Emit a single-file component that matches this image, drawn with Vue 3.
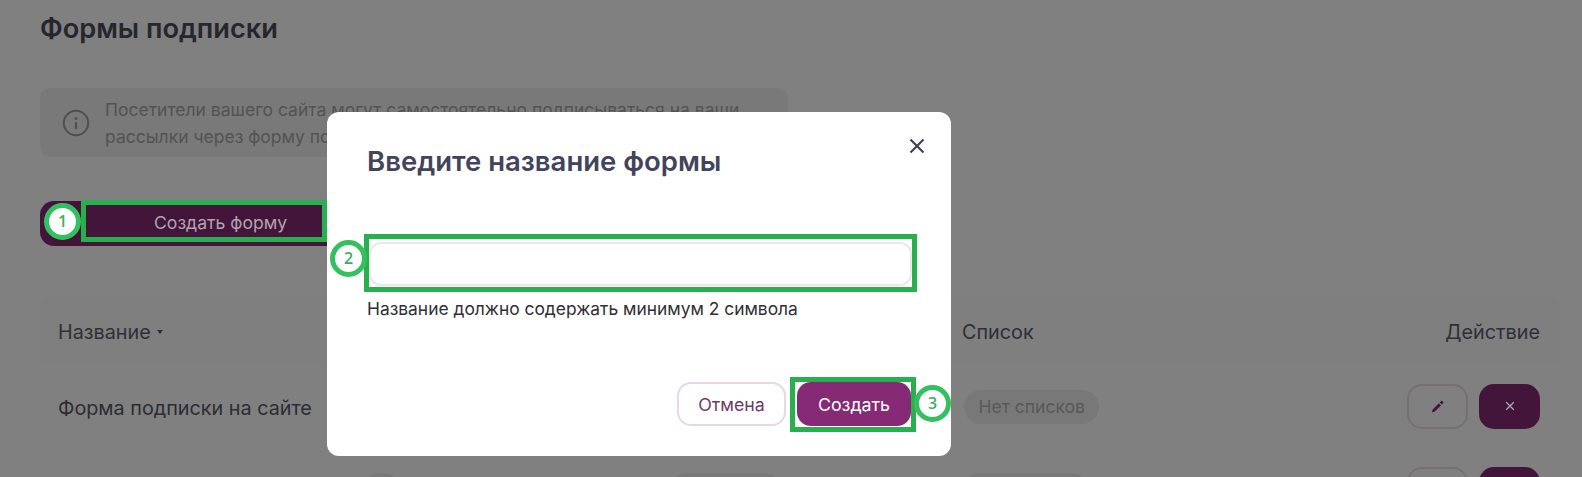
<template>
  <div class="page">
    <h1 class="title">Формы подписки</h1>

    <div class="info">
      <svg class="info-icon" viewBox="0 0 28 28" width="28" height="28" fill="none">
        <circle cx="14" cy="14" r="12.2" stroke="#4f4f4f" stroke-width="2" />
        <circle cx="14" cy="9.6" r="1.4" fill="#4f4f4f" />
        <rect x="12.9" y="13" width="2.2" height="7" rx="1" fill="#4f4f4f" />
      </svg>
      <p>
        Посетители вашего сайта могут самостоятельно подписываться на ваши<br />
        рассылки через форму подписки
      </p>
    </div>

    <button class="create-btn">Создать форму</button>

    <div class="table">
      <div class="thead row">
        <div class="sort">Название <span class="caret"></span></div>
        <div></div>
        <div></div>
        <div>Список</div>
        <div class="right">Действие</div>
      </div>
      <div v-for="(r, i) in rows" :key="i" class="tr row">
        <div class="name">{{ r.name }}</div>
        <div><span class="chip chip-short"></span></div>
        <div><span class="chip chip-mid"></span></div>
        <div><span class="chip">{{ r.list }}</span></div>
        <div class="actions">
          <button class="act edit">
            <svg viewBox="0 0 16 16" width="15" height="15">
              <path d="M2 14.500l.9-3.300 6.600-6.600 2.200 2.200-6.600 6.600z" fill="#43153b" />
              <path d="M10.400 3.700l1.300-1.300a1.200 1.200 0 0 1 1.700 0l.5.500a1.200 1.200 0 0 1 0 1.700l-1.300 1.300z" fill="#43153b" />
            </svg>
          </button>
          <button class="act del">
            <svg viewBox="0 0 12 12" width="10" height="10" fill="none">
              <path d="M1.500 1.500l9 9M10.500 1.500l-9 9" stroke="#b9a5b5" stroke-width="1.500" />
            </svg>
          </button>
        </div>
      </div>
    </div>

    <!-- обводки со скриншота поверх кнопки -->
    <div class="frame frame-btn"></div>
    <div class="badge badge-1">1</div>

    <div class="modal">
      <div class="modal-head">
        <h2>Введите название формы</h2>
        <svg class="close" viewBox="0 0 16 16" width="16" height="16" fill="none">
          <path d="M1.500 1.500l13 13M14.500 1.500l-13 13" stroke="#3f4156" stroke-width="2.200" />
        </svg>
      </div>
      <input class="name-input" type="text" />
      <p class="hint">Название должно содержать минимум 2 символа</p>
      <div class="modal-foot">
        <button class="btn ghost">Отмена</button>
        <button class="btn solid">Создать</button>
      </div>
      <div class="frame frame-input"></div>
      <div class="badge badge-2">2</div>
      <div class="frame frame-save"></div>
      <div class="badge badge-3">3</div>
    </div>
  </div>
</template>

<script setup>
const rows = [
  { name: "Форма подписки на сайте", list: "Нет списков" },
  { name: "", list: "" },
];
</script>

<style>
html,
body {
  margin: 0;
  background: #808080;
}
</style>

<style scoped>
.page {
  position: relative;
  height: 477px;
  overflow: hidden;
  padding: 13px 22px 0 40px;
  box-sizing: border-box;
  background: #808080;
  font-family: Inter, "Noto Sans", sans-serif;
  color: #2a2a33;
}
.title {
  margin: 0;
  font-size: 27.200px;
  line-height: 32px;
  font-weight: 600;
  color: #26262d;
}
.info {
  display: flex;
  align-items: center;
  gap: 15px;
  width: 748px;
  height: 69px;
  margin-top: 43px;
  padding-left: 22px;
  box-sizing: border-box;
  background: #797979;
  border-radius: 10px;
}
.info-icon {
  flex: none;
}
.info p {
  margin: 0;
  font-size: 17.500px;
  line-height: 27px;
  color: #535353;
  white-space: nowrap;
}
.create-btn {
  display: block;
  width: 300px;
  height: 45px;
  margin-top: 44px;
  padding: 0 0 2px 114px;
  border: 0;
  border-radius: 14px;
  background: #43153b;
  color: #b3a3b0;
  font: 400 17.600px Inter, sans-serif;
  text-align: left;
}
.table {
  margin-top: 51px;
  background: #7f7f7f;
  border-radius: 10px;
}
.row {
  display: grid;
  grid-template-columns: 304px 306px 294px 1fr 200px;
  align-items: center;
  padding: 0 20px 0 18px;
  font-size: 19.800px;
}
.thead {
  box-sizing: border-box;
  height: 68px;
  padding-top: 2px;
  color: #2f2f36;
}
.tr {
  height: 82px;
  margin-bottom: 1px;
  background: #808080;
  color: #2c2c34;
}
.name {
  padding-top: 3px;
  white-space: nowrap;
}
.sort {
  display: flex;
  align-items: center;
}
.caret {
  width: 0;
  height: 0;
  margin-left: 6px;
  border: 3.500px solid transparent;
  border-top: 4px solid #2f2f36;
  border-bottom: 0;
}
.right {
  text-align: right;
}
.chip {
  display: inline-block;
  height: 34px;
  margin: 1px 0 0 2px;
  padding: 0 14.500px;
  border-radius: 17px;
  background: #787878;
  color: #595959;
  font-size: 17.500px;
  line-height: 34px;
  vertical-align: middle;
  white-space: nowrap;
}
.chip:empty {
  width: 124px;
  padding: 0;
}
.chip-short:empty {
  width: 36px;
}
.chip-mid:empty {
  width: 111px;
}
.actions {
  display: flex;
  justify-content: flex-end;
  gap: 11px;
}
.act {
  display: flex;
  align-items: center;
  justify-content: center;
  width: 61px;
  height: 45px;
  padding: 0;
  box-sizing: border-box;
  border-radius: 15px;
}
.edit {
  background: #808080;
  border: 2px solid #767076;
}
.del {
  background: #43153b;
  border: 0;
}
.frame {
  position: absolute;
  box-sizing: border-box;
  border: 5px solid #28b04e;
  pointer-events: none;
}
.frame-btn {
  left: 81px;
  top: 200px;
  width: 246px;
  height: 42px;
}
.badge {
  position: absolute;
  width: 37px;
  height: 37px;
  box-sizing: border-box;
  border: 5px solid #35c05f;
  border-radius: 50%;
  background: #fff;
  color: #3fae62;
  font: 600 16px/27px "Open Sans", sans-serif;
  text-align: center;
}
.badge-1 {
  left: 44px;
  top: 203px;
}
.modal {
  position: absolute;
  left: 327px;
  top: 112px;
  width: 624px;
  height: 344px;
  padding: 0 40px;
  box-sizing: border-box;
  background: #fff;
  border-radius: 12px;
  display: flex;
  flex-direction: column;
}
.modal-head {
  display: flex;
  justify-content: space-between;
  height: 130px;
}
.modal-head h2 {
  margin: 33px 0 0;
  font-size: 27.500px;
  line-height: 32px;
  font-weight: 600;
  color: #42445a;
}
.close {
  margin: 26px -14px 0 0;
}
.name-input {
  width: 543px;
  height: 44px;
  margin-left: 2px;
  box-sizing: border-box;
  border: 2px solid #e9e9ec;
  border-radius: 12px;
  background: #fff;
  outline: none;
}
.hint {
  margin: 13px 0 0;
  font-size: 17.400px;
  line-height: 20px;
  color: #2f2f36;
  white-space: nowrap;
}
.modal-foot {
  display: flex;
  justify-content: flex-end;
  gap: 11px;
  margin-top: auto;
  margin-bottom: 30px;
}
.btn {
  height: 44px;
  border-radius: 14px;
  font: 400 17.800px Inter, sans-serif;
  box-sizing: border-box;
}
.ghost {
  width: 109px;
  background: #fff;
  border: 2px solid #e6d9e3;
  color: #6f3a69;
}
.solid {
  width: 114px;
  border: 0;
  background: #862a75;
  color: #fff;
}
.frame-input {
  left: 37px;
  top: 122px;
  width: 553px;
  height: 58px;
}
.frame-save {
  left: 463px;
  top: 265px;
  width: 126px;
  height: 55px;
}
.badge-2 {
  left: 3px;
  top: 128px;
}
.badge-3 {
  left: 587px;
  top: 273px;
}
</style>
